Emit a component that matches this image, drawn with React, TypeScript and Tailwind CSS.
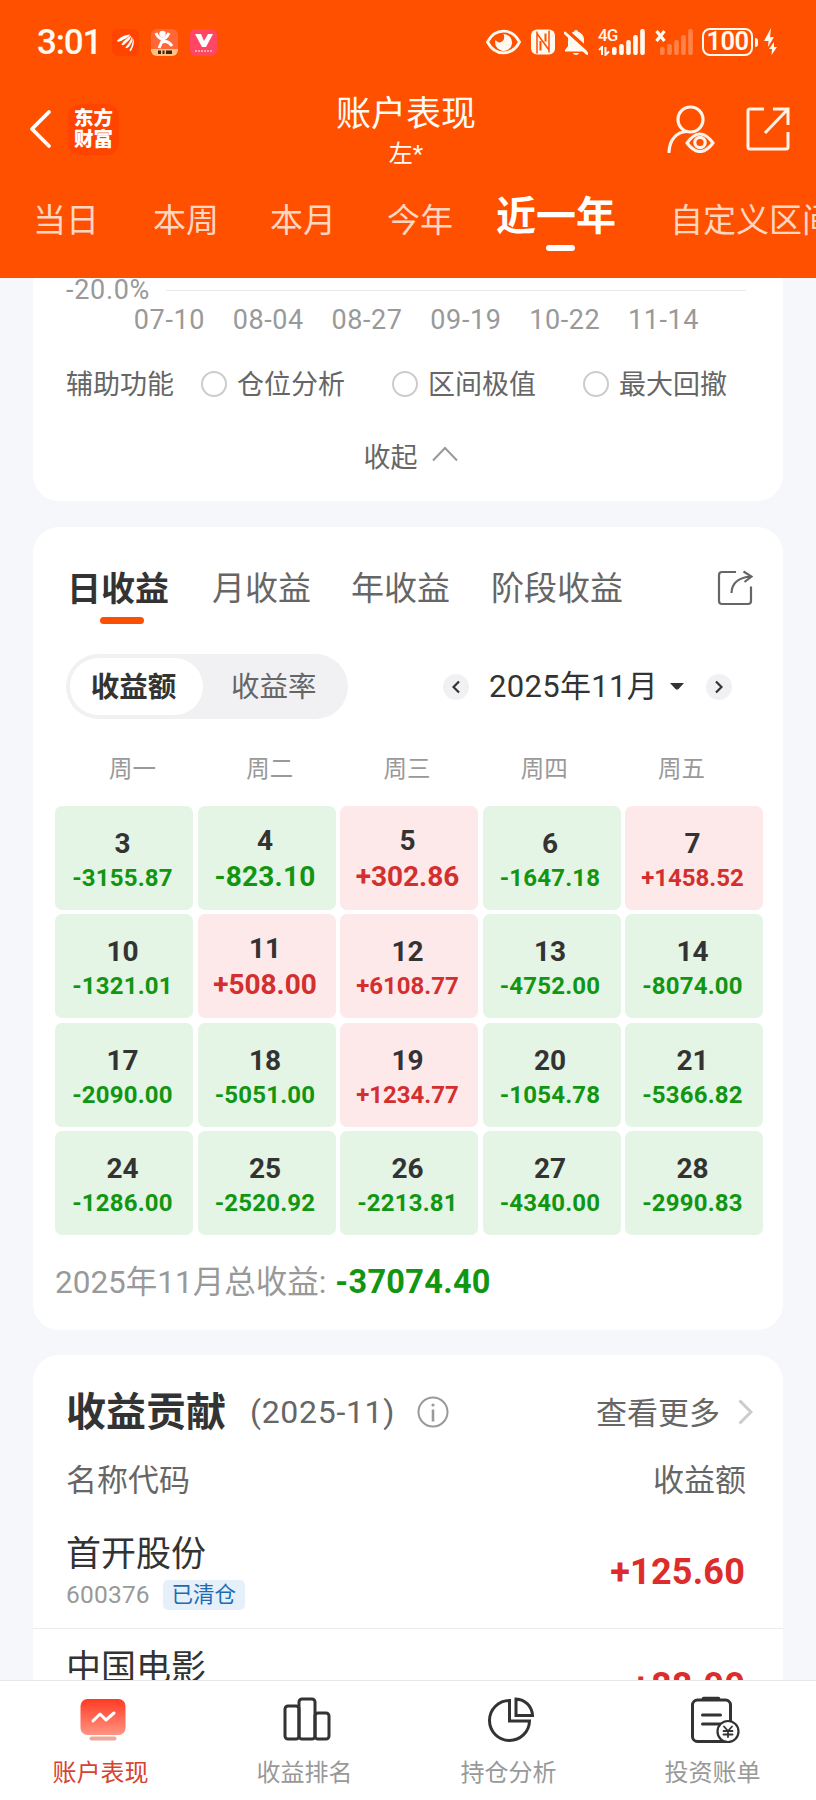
import type { ReactNode } from "react";
import clsx from "clsx";

interface DayProfit {
  day: number;
  value: string;
}

const PERIODS = [
  { label: "当日", gap: "ml-[33px]" },
  { label: "本周", gap: "ml-[54px]" },
  { label: "本月", gap: "ml-[51px]" },
  { label: "今年", gap: "ml-[51px]" },
  { label: "近一年", gap: "ml-[43px]" },
  { label: "自定义区间", gap: "ml-[54px]" },
];

const DATES = ["07-10", "08-04", "08-27", "09-19", "10-22", "11-14"];

const WEEKDAYS = ["周一", "周二", "周三", "周四", "周五"];

const DAYS: DayProfit[] = [
  { day: 3, value: "-3155.87" },
  { day: 4, value: "-823.10" },
  { day: 5, value: "+302.86" },
  { day: 6, value: "-1647.18" },
  { day: 7, value: "+1458.52" },
  { day: 10, value: "-1321.01" },
  { day: 11, value: "+508.00" },
  { day: 12, value: "+6108.77" },
  { day: 13, value: "-4752.00" },
  { day: 14, value: "-8074.00" },
  { day: 17, value: "-2090.00" },
  { day: 18, value: "-5051.00" },
  { day: 19, value: "+1234.77" },
  { day: 20, value: "-1054.78" },
  { day: 21, value: "-5366.82" },
  { day: 24, value: "-1286.00" },
  { day: 25, value: "-2520.92" },
  { day: 26, value: "-2213.81" },
  { day: 27, value: "-4340.00" },
  { day: 28, value: "-2990.83" },
];

function SignalBars({ className }: { className?: string }) {
  return (
    <svg width="33" height="28" viewBox="0 0 33 28" fill="currentColor" className={className}>
      <rect x="0" y="19" width="4.6" height="8" rx="2" />
      <rect x="7.2" y="16" width="4.6" height="11" rx="2" />
      <rect x="14.2" y="12" width="4.6" height="15" rx="2" />
      <rect x="21.2" y="7" width="4.6" height="20" rx="2" />
      <rect x="28.2" y="1" width="4.6" height="26" rx="2" />
    </svg>
  );
}

function StatusBar() {
  return (
    <div className="flex h-[84px] items-center pl-[37px] pr-[38px] text-[#fffaf0]">
      <span className="w-[75px] pt-0.5 text-[35px] font-medium leading-[36px] tracking-[-1.2px]">3:01</span>
      <div className="flex gap-3">
        <svg width="27" height="27" viewBox="0 0 27 27">
          <rect width="27" height="27" rx="6" fill="#ff4400" />
          <g fill="#fff">
            <path d="M5 11.500C8 8 12 6 18 5.500c-1 3-5 4-9 6.500-2 1-4 1-4-.500z" />
            <path d="M9.500 15.500C12 11 15 9.500 19 6.500c0 3.500-3 5.500-5.500 8-1.500 1.500-4 2.500-4 1z" />
            <path d="M13.500 18.500C16 15 18.500 12 20 7.500c1.500 4-.500 6.500-2.500 9.500-1.500 2-4 3-4 1.500z" />
            <path d="M17.500 21c2-3 3-6 3.500-11.500 2 4 0 8.500-1.500 11.500-.500 1.500-2 1.500-2 0z" />
          </g>
        </svg>
        <svg width="27" height="27" viewBox="0 0 27 27">
          <rect width="27" height="27" rx="6" fill="#ff6638" />
          <path d="M0 20h27v1a6 6 0 0 1-6 6H6a6 6 0 0 1-6-6z" fill="#ffc183" />
          <circle cx="11.500" cy="5" r="3.200" fill="#fff" />
          <path d="M5 4q2 5 6 6 4 0 7-6M12 10l-4 9M11 13q6-2 10 4" fill="none" stroke="#fff" strokeWidth="3" />
          <path d="M7 23.300h3M11.500 23.300h2M15 23.300h6" stroke="#3a2512" strokeWidth="3.400" />
        </svg>
        <svg width="27" height="27" viewBox="0 0 27 27">
          <rect width="27" height="27" rx="6" fill="#ff4763" />
          <path d="M5 5h6l3 7 4-7h5l-7 13h-4z" fill="#fff" />
          <path d="M5 22h17" stroke="#ffc0c8" strokeWidth="1.600" strokeDasharray="2 1" />
        </svg>
      </div>
      <div className="ml-auto flex items-center">
        <svg width="35" height="26" viewBox="0 0 35 26" fill="none">
          <path d="M1.500 13C9-1.500 26-1.500 33.500 13 26 27.500 9 27.500 1.500 13z" stroke="currentColor" strokeWidth="2.800" />
          <path d="M17.500 5a8.500 8.500 0 1 1-8 6q3 4 6.500 1.500T17.500 5z" fill="currentColor" />
        </svg>
        <svg width="24" height="26" viewBox="0 0 24 26" className="ml-[10px]">
          <rect y="0.500" width="24" height="25" rx="6" fill="currentColor" />
          <path d="M6 2.500v22M18 1.500v22M6 4.500l12 16.500" fill="none" stroke="#ff5000" strokeWidth="1.500" />
          <path d="M9.500 12v9.500M14.500 4.500v8" stroke="#ff5000" strokeWidth="2" />
        </svg>
        <svg width="24" height="27" viewBox="0 0 24 27" className="ml-[9px]">
          <path d="M12 1c1.500 0 2 1 2 1.700C18 4 20 7 20 11v6l3 4v1.500H1V21l3-4v-6c0-4 2-7 6-8.300C10 2 10.500 1 12 1zM8.500 24h7q-3.500 4-7 0z" fill="currentColor" />
          <path d="M1 0l23 20.500" stroke="#ff5000" strokeWidth="3.500" />
          <path d="M1 4l22 20.500" stroke="currentColor" strokeWidth="2.800" strokeLinecap="round" />
        </svg>
        <div className="relative ml-[24px] h-[28px] w-[33px]">
          <span className="absolute -left-[14px] top-0 text-[17px] font-medium leading-[15px] tracking-[-1px]">4G</span>
          <svg width="12" height="10" viewBox="0 0 12 10" className="absolute -left-[14px] top-[18px]" fill="none" stroke="currentColor" strokeWidth="2">
            <path d="M1 4l3-3v8M7.500 1v8l3.500-3.500" />
          </svg>
          <SignalBars />
        </div>
        <div className="relative ml-[15px] h-[28px] w-[33px]">
          <svg width="12" height="12" viewBox="0 0 12 12" className="absolute -left-[5px] top-0.5" stroke="currentColor" strokeWidth="3.200">
            <path d="M1.500 1l8 10M9.500 1l-8 10" />
          </svg>
          <SignalBars className="opacity-30" />
        </div>
        <div className="ml-[9px] flex h-[28px] w-[51px] items-center justify-center rounded-[8px] border-2 border-current text-[25.500px] font-semibold leading-none tracking-[-0.500px]">
          100
        </div>
        <div className="ml-0.5 h-[9px] w-[3px] rounded-r-sm bg-current" />
        <svg width="14" height="28" viewBox="0 0 14 28" className="ml-[6px]" fill="currentColor">
          <path d="M7 0L0 13h4.500L4 19l6-10H6zM10 14l-5 7h3l-.500 6L13 19h-3z" />
        </svg>
      </div>
    </div>
  );
}

function Header() {
  return (
    <header className="flex h-[278px] shrink-0 flex-col overflow-hidden bg-[#ff5000]">
      <StatusBar />
      <div className="flex h-[90px] items-center justify-between pl-[28px] pr-[26px]">
        <div className="flex w-[120px] items-center gap-4">
          <svg width="24" height="40" viewBox="0 0 24 40" fill="none" stroke="#fff" strokeWidth="3.800" strokeLinecap="round" strokeLinejoin="round" className="shrink-0">
            <path d="M21 3L4 20l17 17" />
          </svg>
          <div className="flex size-[51px] shrink-0 flex-col items-center justify-center rounded-xl bg-[#ff4400] text-[19.500px] font-black leading-[21px] text-white">
            <span>东方</span>
            <span>财富</span>
          </div>
        </div>
        <div className="flex flex-col items-center pt-[5px] text-[#fffaf5]">
          <h1 className="text-[35px] leading-[44px]">账户表现</h1>
          <span className="text-[24px] leading-[34px]">左*</span>
        </div>
        <div className="flex w-[126px] items-center justify-end gap-[30px]">
          <svg width="50" height="48" viewBox="0 0 50 48" fill="none" stroke="#fff3ea" strokeWidth="3.200">
            <circle cx="24.500" cy="14.500" r="12.500" />
            <path d="M3 47C3.500 35 10 27 21 26.500" strokeLinecap="round" />
            <path d="M21 38Q34 20 47 38 34 55 21 38z" strokeLinejoin="round" />
            <circle cx="34" cy="37.500" r="5.200" />
          </svg>
          <svg width="44" height="44" viewBox="0 0 44 44" fill="none" stroke="#fff3ea" strokeWidth="3">
            <path d="M18 2H4q-2 0-2 2v36q0 2 2 2h36q2 0 2-2V25" />
            <path d="M27 2h15v16M42 2L19 26" />
          </svg>
        </div>
      </div>
      <nav className="flex h-[92px] items-center whitespace-nowrap text-[33px] text-[#ffd6c2]">
        {PERIODS.map((p) =>
          p.label === "近一年" ? (
            <div key={p.label} className={clsx("relative shrink-0 text-[40px] font-bold leading-[60px] text-white", p.gap)}>
              <span className="relative -top-[3px]">{p.label}</span>
              <div className="absolute -bottom-px left-[50px] h-[6px] w-[29px] rounded-full bg-white" />
            </div>
          ) : (
            <span key={p.label} className={clsx("shrink-0 pt-px leading-[60px]", p.gap)}>{p.label}</span>
          ),
        )}
      </nav>
    </header>
  );
}

function RadioOption({ label }: { label: string }) {
  return (
    <div className="flex items-center gap-[10px]">
      <div className="size-[26px] rounded-full border-2 border-[#ccc]" />
      <span className="pt-0.5">{label}</span>
    </div>
  );
}

function ChartCard() {
  return (
    <section className="mx-[33px] h-[223px] shrink-0 rounded-b-[26px] bg-white text-[27px] text-[#666]">
      <div className="flex h-6 items-center pl-[33px] pr-[37px] text-[#999]">
        <span className="w-[100px] leading-none tracking-[0.700px]">-20.0%</span>
        <div className="h-px flex-1 bg-[#e8e8e8]" />
      </div>
      <div className="grid h-9 grid-cols-6 items-center pl-[87px] pr-[70px] text-center leading-none tracking-[0.600px] text-[#999]">
        {DATES.map((d) => (
          <span key={d}>{d}</span>
        ))}
      </div>
      <div className="flex h-[92px] items-center pl-[33px] leading-none">
        <span className="mr-[27px] pt-0.5">辅助功能</span>
        <div className="flex gap-[47px]">
          <RadioOption label="仓位分析" />
          <RadioOption label="区间极值" />
          <RadioOption label="最大回撤" />
        </div>
      </div>
      <div className="flex h-[54px] items-center justify-center gap-[14px] pl-[5px] leading-none">
        <span className="pt-0.5">收起</span>
        <svg width="26" height="16" viewBox="0 0 26 16" className="mb-1.5" fill="none" stroke="#999" strokeWidth="2">
          <path d="M1 14.500L13 2l12 12.500" />
        </svg>
      </div>
    </section>
  );
}

function RoundArrow({ flip }: { flip?: boolean }) {
  return (
    <div className="flex size-[26px] items-center justify-center rounded-full bg-[#f1f1f4]">
      <svg width="8" height="14" viewBox="0 0 8 14" fill="none" stroke="#333" strokeWidth="2.200" className={clsx(flip && "rotate-180")}>
        <path d="M7 1.500L1.500 7 7 12.500" />
      </svg>
    </div>
  );
}

function DayCell({ day, value }: DayProfit) {
  const up = value.startsWith("+");
  // shorter amounts get a larger type size
  const large = value.length < 8;
  return (
    <div
      className={clsx(
        "flex h-[104px] flex-col items-center rounded-[7px] pr-[3px] font-bold",
        up ? "bg-[#fde9e9]" : "bg-[#e4f4e5]",
        large ? "pt-[18px]" : "pt-[21px]",
      )}
    >
      <span className="text-[28px] leading-[34px] text-[#333]">{day}</span>
      <span
        className={clsx(
          up ? "text-[#d32f2f]" : "text-[#129612]",
          large ? "mt-px text-[28px] leading-[36px]" : "text-[24px] leading-[34px]",
          !up && "tracking-[0.200px]",
        )}
      >
        {value}
      </span>
    </div>
  );
}

function CalendarCard() {
  return (
    <section className="mx-[33px] mt-[26px] h-[803px] shrink-0 rounded-[26px] bg-white">
      <div className="flex h-[122px] items-center pl-[34px] pr-[30px] text-[33px] leading-[50px] text-[#666]">
        <div className="relative text-[34px] font-bold text-[#333]">
          <span className="relative top-px">日收益</span>
          <div className="absolute -bottom-[11px] left-[33px] h-[7px] w-[44px] rounded-full bg-[#fa5005]" />
        </div>
        <span className="ml-[43px] pt-0.5">月收益</span>
        <span className="ml-[40px] pt-0.5">年收益</span>
        <span className="ml-[41px] pt-0.5">阶段收益</span>
        <svg width="36" height="36" viewBox="0 0 36 36" fill="none" stroke="#666" strokeWidth="2.200" className="ml-auto">
          <path d="M19 2H5Q2 2 2 5v26q0 3 3 3h26q3 0 3-3V16.500" />
          <path d="M14.500 23Q15 8 34 6.500M26.500 1.500l8 5-7 5.500" />
        </svg>
      </div>
      <div className="mt-[5px] flex h-[65px] items-center pl-[33px] pr-[51px] leading-none">
        <div className="flex h-[65px] w-[282px] items-center rounded-full bg-[#f1f1f4] pl-1 text-[28.500px]">
          <div className="flex h-[57px] w-[133px] items-center justify-center rounded-full bg-white pr-[6px] pt-1 font-bold text-[#333]">
            收益额
          </div>
          <span className="ml-[28px] pt-1 text-[#666]">收益率</span>
        </div>
        <div className="ml-auto flex items-center text-[#333]">
          <RoundArrow />
          <span className="ml-[20px] text-[31px] tracking-[0.300px]">2025年11月</span>
          <svg width="14" height="7" viewBox="0 0 14 7" className="ml-[12px] mr-[22px]" fill="#333">
            <path d="M0 0h14L8.500 6q-1.500 1-3 0z" />
          </svg>
          <RoundArrow flip />
        </div>
      </div>
      <div className="mt-[11px] grid h-[76px] grid-cols-5 items-center pl-[31px] pr-[33px] pt-[3px] text-center text-[23.500px] text-[#999]">
        {WEEKDAYS.map((w) => (
          <span key={w}>{w}</span>
        ))}
      </div>
      <div className="ml-[22px] grid w-[708px] grid-cols-5 gap-x-[4.500px] gap-y-[4.300px]">
        {DAYS.map((d) => (
          <DayCell key={d.day} {...d} />
        ))}
      </div>
      <div className="flex h-[94px] items-center gap-[9px] pl-[22px] leading-none">
        <span className="pt-px text-[31.500px] text-[#999]">2025年11月总收益:</span>
        <span className="text-[32.500px] font-bold tracking-[0.300px] text-[#129612]">-37074.40</span>
      </div>
    </section>
  );
}

function StockRow({ name, value, children }: { name: string; value: string; children?: ReactNode }) {
  return (
    <div className="flex h-[114px] items-center justify-between border-b border-[#ebebeb] pl-[33px] pr-[38px]">
      <div className="flex flex-col self-start pt-[18px]">
        <span className="text-[35px] leading-[44px] text-[#333]">{name}</span>
        {children}
      </div>
      <span className="pt-px text-[36px] font-bold leading-none tracking-[0.200px] text-[#dd2c2c]">{value}</span>
    </div>
  );
}

function ContributionCard() {
  return (
    <section className="mx-[33px] mt-[25px] shrink-0 rounded-t-[26px] bg-white">
      <div className="flex h-[82px] items-center pl-[33px] pr-[30px] pt-[32px] leading-none text-[#666]">
        <h2 className="pt-0.5 text-[40px] font-bold text-[#333]">收益贡献</h2>
        <span className="ml-[24px] text-[32px] tracking-[0.700px]">(2025-11)</span>
        <svg width="32" height="32" viewBox="0 0 32 32" fill="none" stroke="#999" strokeWidth="2" className="ml-[22px]">
          <circle cx="16" cy="16" r="14.500" />
          <path d="M16 13.500v12" strokeWidth="2.600" />
          <circle cx="16" cy="9" r="1.600" fill="#999" stroke="none" />
        </svg>
        <span className="ml-auto pt-0.5 text-[31px]">查看更多</span>
        <svg width="15" height="26" viewBox="0 0 15 26" fill="none" stroke="#ccc" strokeWidth="3" className="ml-[18px]">
          <path d="M1.500 1.500L13 13 1.500 24.500" />
        </svg>
      </div>
      <div className="mt-2 flex h-[70px] items-center justify-between pl-[33px] pr-[37px] pt-[3px] text-[31px] text-[#666]">
        <span>名称代码</span>
        <span>收益额</span>
      </div>
      <StockRow name="首开股份" value="+125.60">
        <div className="flex h-[36px] items-center text-[24.500px] leading-none text-[#999]">
          <span className="tracking-[0.200px]">600376</span>
          <span className="ml-[13px] flex h-[30px] w-[82px] items-center justify-center rounded-[5px] bg-[#e5f0fa] text-[21.500px] text-[#1f6bb0]">
            已清仓
          </span>
        </div>
      </StockRow>
      <StockRow name="中国电影" value="+88.00" />
    </section>
  );
}

function ScreenIcon() {
  return (
    <svg width="46" height="46" viewBox="0 0 46 46">
      <defs>
        <linearGradient id="screen" x1="0" y1="0" x2="0" y2="1">
          <stop offset="0" stopColor="#ff3b24" />
          <stop offset="1" stopColor="#ff9482" />
        </linearGradient>
      </defs>
      <rect x="0.500" y="2" width="45" height="36" rx="7" fill="url(#screen)" />
      <path d="M13 24l7-7 6 6 8-7" fill="none" stroke="#fff" strokeWidth="3" strokeLinecap="round" strokeLinejoin="round" />
      <rect x="9.500" y="39.500" width="27" height="4" rx="2" fill="#eba89b" />
    </svg>
  );
}

function RankIcon() {
  return (
    <svg width="48" height="46" viewBox="0 0 48 46" fill="none" stroke="#333" strokeWidth="3">
      <rect x="2" y="9" width="14" height="33" rx="3" />
      <rect x="16" y="2" width="16" height="40" rx="3" />
      <rect x="32" y="16" width="14" height="26" rx="3" />
    </svg>
  );
}

function PieIcon() {
  return (
    <svg width="46" height="46" viewBox="0 0 46 46" fill="none" stroke="#333" strokeWidth="3">
      <path d="M21.500 3.500A20 20 0 1 0 41.500 24H21.500z" />
      <path d="M28 2v16.500h16.500C44 9 37 2.500 28 2z" />
    </svg>
  );
}

function BillIcon() {
  return (
    <svg width="50" height="48" viewBox="0 0 50 48" fill="none" stroke="#333" strokeWidth="3" strokeLinecap="round">
      <rect x="2.500" y="4" width="38" height="41.500" rx="5" />
      <path d="M13.500 2.500h15" strokeWidth="3.500" />
      <path d="M12.500 19h18M12.500 28h18" />
      <circle cx="38" cy="35.500" r="10.500" fill="#fff" stroke="#333" strokeWidth="2.200" />
      <path d="M34 30.500l4 4.500 4-4.500M38 35v6M33.500 35h9M33.500 38.500h9" strokeWidth="1.800" />
    </svg>
  );
}

const TABS = [
  { label: "账户表现", icon: ScreenIcon, active: true },
  { label: "收益排名", icon: RankIcon, active: false },
  { label: "持仓分析", icon: PieIcon, active: false },
  { label: "投资账单", icon: BillIcon, active: false },
];

function BottomNav() {
  return (
    <nav className="grid h-[120px] shrink-0 grid-cols-4 border-t border-[#e8e8e8] bg-white">
      {TABS.map((t) => (
        <div key={t.label} className="flex flex-col items-center pt-[15px]">
          <div className="flex h-12 items-center pl-px">
            <t.icon />
          </div>
          <span className={clsx("mt-[12px] pr-[3px] text-[24px] leading-[34px]", t.active ? "text-[#d8422f]" : "text-[#999]")}>
            {t.label}
          </span>
        </div>
      ))}
    </nav>
  );
}

export default function App() {
  return (
    <div className="flex h-[1800px] w-[816px] flex-col overflow-hidden bg-[#f6f7fa] font-[Roboto,'Noto_Sans_CJK_SC',sans-serif]">
      <Header />
      <main className="flex min-h-0 flex-1 flex-col overflow-hidden">
        <ChartCard />
        <CalendarCard />
        <ContributionCard />
      </main>
      <BottomNav />
    </div>
  );
}
